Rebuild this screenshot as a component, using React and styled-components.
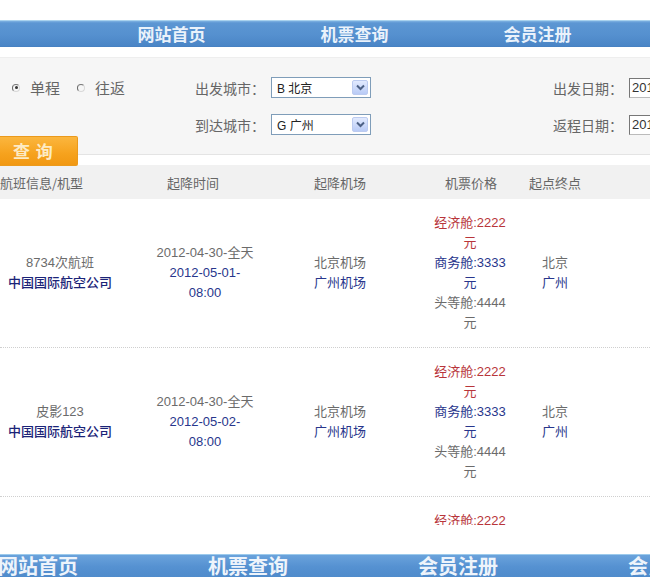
import React from "react";
import styled, { createGlobalStyle } from "styled-components";

const GlobalStyle = createGlobalStyle`
  html, body { margin: 0; padding: 0; background: #fff; overflow: hidden; }
  body { font-family: "Liberation Sans", "Noto Sans CJK SC", sans-serif; }
`;

const navItems = ["网站首页", "机票查询", "会员注册"];

const flights = [
  { no: "8734次航班", company: "中国国际航空公司", depart: "2012-04-30-全天", arrive: ["2012-05-01-", "08:00"] },
  { no: "皮影123", company: "中国国际航空公司", depart: "2012-04-30-全天", arrive: ["2012-05-02-", "08:00"] },
  { no: "8734次航班", company: "中国国际航空公司", depart: "2012-04-30-全天", arrive: ["2012-05-03-", "08:00"] },
];

export default function App() {
  return (
    <>
      <GlobalStyle />
      <Page>
        <NavBar>
          {navItems.map((n) => (
            <NavItem key={n}>{n}</NavItem>
          ))}
        </NavBar>

        <SearchPanel>
          <Fields>
            <RadioGroup>
              <Radio $checked />
              <RadioLabel>单程</RadioLabel>
              <Radio />
              <RadioLabel>往返</RadioLabel>
            </RadioGroup>
            <Field>
              <Label>出发城市：</Label>
              <Select value="B 北京" />
            </Field>
            <Field>
              <Label>出发日期：</Label>
              <DateInput>2012-04-30</DateInput>
            </Field>
            <span />
            <Field>
              <Label>到达城市：</Label>
              <Select value="G 广州" />
            </Field>
            <Field>
              <Label>返程日期：</Label>
              <DateInput>2012-05-01</DateInput>
            </Field>
          </Fields>
          <SearchButton>查 询</SearchButton>
        </SearchPanel>

        <TableWrap>
          <HeadRow>
            <Cell $pr={40}>航班信息/机型</Cell>
            <Cell $pr={14}>起降时间</Cell>
            <Cell>起降机场</Cell>
            <Cell $pl={22}>机票价格</Cell>
            <Cell>起点终点</Cell>
            <Cell />
          </HeadRow>
          {flights.map((f, i) => (
            <Row key={i}>
              <Cell>
                <Line>{f.no}</Line>
                <Line $tone="navy">{f.company}</Line>
              </Cell>
              <Cell $pl={10}>
                <Line>{f.depart}</Line>
                {f.arrive.map((a) => (
                  <Line key={a} $tone="blue">{a}</Line>
                ))}
              </Cell>
              <Cell>
                <Line>北京机场</Line>
                <Line $tone="blue">广州机场</Line>
              </Cell>
              <Cell $pl={20}>
                <Line $tone="red">经济舱:2222</Line>
                <Line $tone="red">元</Line>
                <Line $tone="blue">商务舱:3333</Line>
                <Line $tone="blue">元</Line>
                <Line>头等舱:4444</Line>
                <Line>元</Line>
              </Cell>
              <Cell>
                <Line>北京</Line>
                <Line $tone="blue">广州</Line>
              </Cell>
              <Cell />
            </Row>
          ))}
        </TableWrap>

        <FooterBar>
          {[...navItems, "会员中心"].map((n) => (
            <FooterItem key={n}>{n}</FooterItem>
          ))}
        </FooterBar>
      </Page>
    </>
  );
}

function Select({ value }) {
  return (
    <SelectBox>
      <span>{value}</span>
      <DropButton>
        <svg width="9" height="7" viewBox="0 0 9 7">
          <polyline points="1,1.5 4.5,5 8,1.5" fill="none" stroke="#4d6185" strokeWidth="2" />
        </svg>
      </DropButton>
    </SelectBox>
  );
}

const Page = styled.div`
  width: 650px;
  height: 577px;
  overflow: hidden;
  padding-top: 20px;
  box-sizing: border-box;
  display: flex;
  flex-direction: column;
  & > * { flex-shrink: 0; }
`;

const NavBar = styled.div`
  height: 27px;
  box-sizing: border-box;
  display: grid;
  grid-template-columns: repeat(3, 183px);
  padding-left: 80px;
  align-items: center;
  background: linear-gradient(#7fb2e2 0px, #5c96d3 2px, #5590cf 14px, #4a85c6 25px, #3f78b8 27px);
  border-top: 1px solid #a8d2ee;
`;

const NavItem = styled.div`
  text-align: center;
  font-family: "Noto Sans CJK SC", sans-serif;
  font-size: 17px;
  font-weight: 700;
  color: #eaf2fb;
  line-height: 24px;
`;

const SearchPanel = styled.div`
  margin-top: 10px;
  height: 98px;
  box-sizing: border-box;
  padding-top: 19px;
  background: #f6f6f6;
  border-top: 1px solid #eeeeee;
  border-bottom: 1px solid #e4e4e4;
  display: flex;
  flex-direction: column;
`;

const Fields = styled.div`
  display: grid;
  grid-template-columns: 195px 358px 1fr;
  grid-auto-rows: 21px;
  row-gap: 16px;
  align-items: center;
`;

const RadioGroup = styled.div`
  display: flex;
  align-items: center;
  padding-left: 12px;
`;

const Radio = styled.span`
  width: 8px;
  height: 8px;
  border-radius: 50%;
  box-sizing: border-box;
  border: 1.5px solid #d8d8d8;
  border-left-color: #666;
  border-top-color: #777;
  margin-right: 10px;
  display: flex;
  align-items: center;
  justify-content: center;
  &::after {
    content: "";
    width: 3px;
    height: 3px;
    border-radius: 50%;
    background: ${(p) => (p.$checked ? "#333" : "transparent")};
  }
`;

const RadioLabel = styled.span`
  font-family: "Noto Sans CJK SC", sans-serif;
  font-size: 15px;
  color: #666;
  margin-right: 17px;
  &:last-child { margin-right: 0; }
`;

const Field = styled.div`
  display: flex;
  align-items: center;
  gap: 6px;
  white-space: nowrap;
`;

const Label = styled.span`
  font-family: "Noto Sans CJK SC", sans-serif;
  font-size: 14px;
  color: #666;
`;

const SelectBox = styled.div`
  width: 100px;
  height: 21px;
  box-sizing: border-box;
  border: 1px solid #7f9db9;
  background: #fff;
  display: flex;
  align-items: center;
  justify-content: space-between;
  padding: 0 2px 0 5px;
  font-size: 12px;
  color: #222;
  font-family: "Liberation Sans", "Noto Sans CJK SC", sans-serif;
`;

const DropButton = styled.span`
  width: 16px;
  height: 15px;
  box-sizing: border-box;
  border: 1px solid #bccbf0;
  border-radius: 2px;
  background: linear-gradient(#e2eafe, #b9cbf6);
  display: flex;
  align-items: center;
  justify-content: center;
`;

const DateInput = styled.div`
  width: 100px;
  height: 20px;
  box-sizing: border-box;
  border: 1px solid #bbb;
  border-top-color: #777;
  border-left-color: #777;
  background: #fff;
  font-size: 13px;
  color: #333;
  line-height: 18px;
  padding-left: 2px;
`;

const SearchButton = styled.div`
  margin-top: 1px;
  margin-bottom: -10px;
  width: 78px;
  height: 30px;
  box-sizing: border-box;
  background: linear-gradient(#fbb63e, #f6a21d 60%, #f19812);
  border: 1px solid #eb9a1c;
  border-left: none;
  border-radius: 0 2px 2px 0;
  color: #fdebc4;
  font-family: "Noto Sans CJK SC", sans-serif;
  font-size: 17px;
  font-weight: 700;
  line-height: 28px;
  padding-left: 13px;
  letter-spacing: 1px;
  position: relative;
  z-index: 1;
`;

const TableWrap = styled.div`
  margin-top: 10px;
  height: 360px;
  overflow: hidden;
`;

const columns = "120px 160px 120px 120px 70px 1fr";

const HeadRow = styled.div`
  display: grid;
  grid-template-columns: ${columns};
  height: 34px;
  align-items: center;
  background: #f1f1f1;
  color: #666;
  font-size: 13px;
  font-family: "Noto Sans CJK SC", sans-serif;
`;

const Row = styled.div`
  display: grid;
  grid-template-columns: ${columns};
  height: 149px;
  box-sizing: border-box;
  align-items: center;
  border-bottom: 1px dotted #cfcfcf;
  font-size: 13px;
`;

const Cell = styled.div`
  text-align: center;
  white-space: nowrap;
  padding-left: ${(p) => p.$pl || 0}px;
  padding-right: ${(p) => p.$pr || 0}px;
`;

const toneColor = { red: "#b8353a", blue: "#28368c", navy: "#1b2478" };

const Line = styled.div`
  line-height: 20px;
  color: ${(p) => toneColor[p.$tone] || "#6b6b6b"};
  font-weight: ${(p) => (p.$tone === "navy" ? 500 : 400)};
`;

const FooterBar = styled.div`
  margin-top: 29px;
  height: 30px;
  display: grid;
  grid-template-columns: repeat(4, 210px);
  margin-left: -2px;
  background: linear-gradient(#6aa3dc, #5591d1 40%, #4a86c7);
  border-top: 1px solid #9ccaec;
`;

const FooterItem = styled.div`
  font-family: "Noto Sans CJK SC", sans-serif;
  font-size: 20px;
  font-weight: 700;
  color: #eef4fb;
  line-height: 22px;
  white-space: nowrap;
`;
